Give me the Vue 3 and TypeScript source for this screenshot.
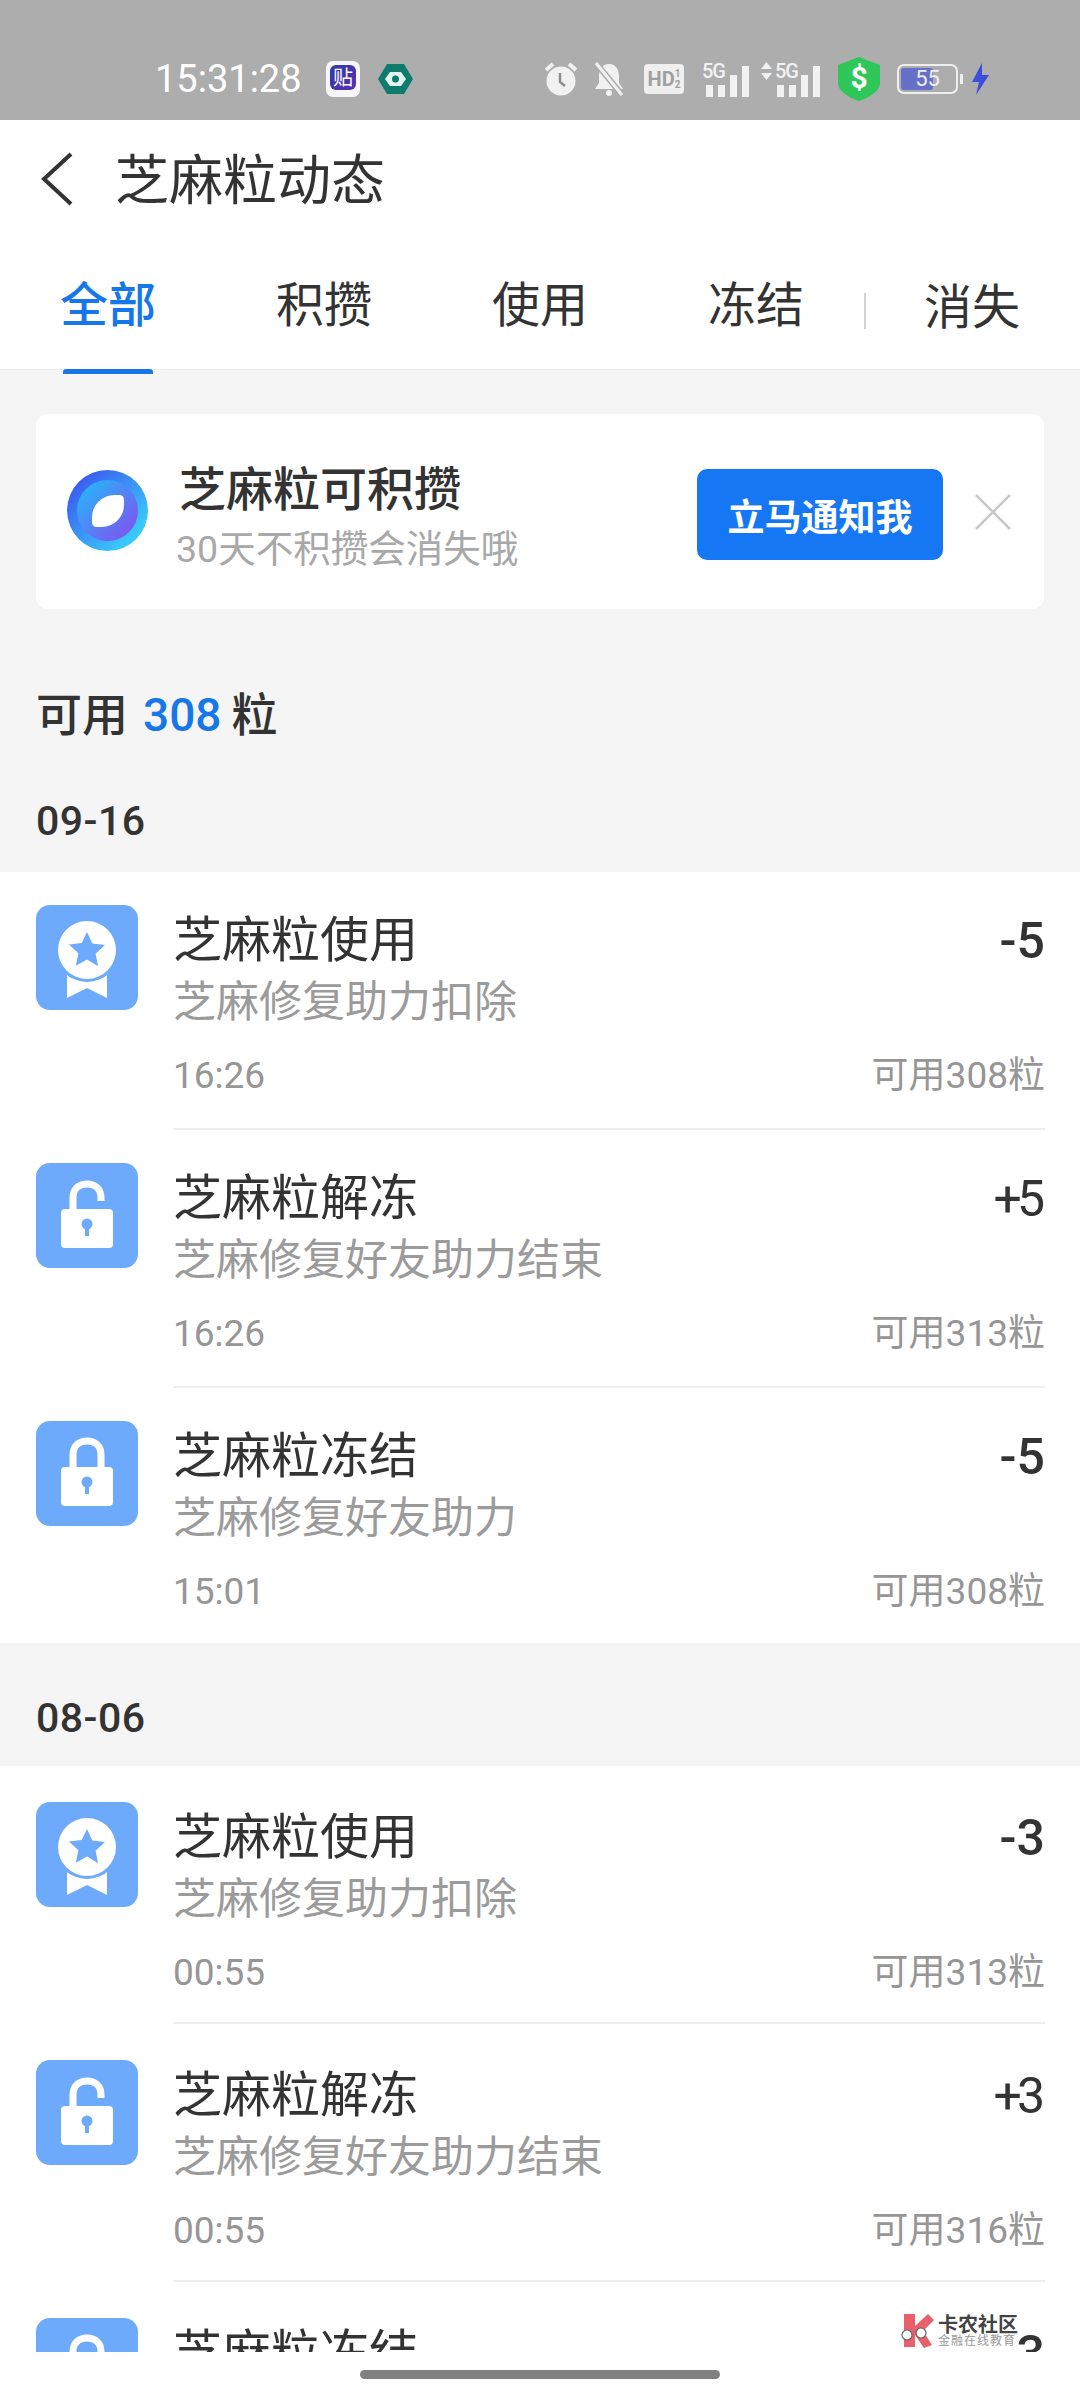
<template>
  <div class="page">
    <div class="status-bar">
      <span class="clock">15:31:28</span>
      <svg class="app-icon" width="34" height="36" viewBox="0 0 34 36">
        <defs>
          <linearGradient id="appFill" x1="0" y1="0" x2="1" y2="1">
            <stop offset="0" stop-color="#2f3aa8" />
            <stop offset="1" stop-color="#5a2fb0" />
          </linearGradient>
        </defs>
        <rect width="34" height="36" rx="7" fill="#f7f7fa" />
        <rect x="4" y="4" width="26" height="25" rx="6" fill="url(#appFill)" />
        <text x="17" y="24" text-anchor="middle" class="app-icon-text">贴</text>
      </svg>
      <svg class="hex-icon" width="35" height="32" viewBox="0 0 35 32">
        <path d="M9 1h17l9 15-9 15H9L0 16z" fill="#0e7c6c" />
        <path d="M12 9h11l5 7-5 7H12l-5-7z" fill="#e6f2ef" />
        <circle cx="17.5" cy="16" r="3.5" fill="#0e7c6c" />
      </svg>
      <div class="status-right">
        <svg width="32" height="34" viewBox="0 0 32 34">
          <circle cx="16" cy="19" r="14.5" fill="#f1f1f1" />
          <path d="M1 8l7-6M31 8l-7-6" stroke="#f1f1f1" stroke-width="4" />
          <path d="M15 11v9l5 4" fill="none" stroke="#8d8d8d" stroke-width="2.5" />
        </svg>
        <svg class="bell" width="32" height="34" viewBox="0 0 32 34">
          <path d="M16 2c7 0 10 6 10 12v7l4 6H2l4-6v-7C6 8 9 2 16 2z" fill="#f1f1f1" />
          <circle cx="16" cy="31" r="3" fill="#f1f1f1" />
          <path d="M3 1l26 32" stroke="#adadad" stroke-width="6" />
          <path d="M3 1l26 32" stroke="#f1f1f1" stroke-width="3" />
        </svg>
        <div class="hd"><span>HD</span><span class="hd-sim">1<br />2</span></div>
        <div class="signal">
          <span class="net">5G</span>
          <i class="b1"></i><i class="b2"></i><i class="b3"></i><i class="b4"></i>
        </div>
        <div class="signal signal-wide">
          <svg class="arrows" width="11" height="18" viewBox="0 0 11 18">
            <path d="M5.5 0L11 7H0zM0 11h11l-5.5 7z" fill="#f1f1f1" />
          </svg>
          <span class="net">5G</span>
          <i class="b1"></i><i class="b2"></i><i class="b3"></i><i class="b4"></i>
        </div>
        <svg class="shield" width="42" height="44" viewBox="0 0 42 44">
          <path d="M21 0l21 8v18c0 8-10 14-21 18C10 40 0 34 0 26V8z" fill="#2fc65a" />
          <text x="21" y="31" text-anchor="middle" class="shield-text">$</text>
        </svg>
        <div class="battery">
          <div class="battery-fill"></div>
          <span class="battery-num">55</span>
        </div>
        <svg class="bolt" width="19" height="32" viewBox="0 0 19 32">
          <path d="M11 0L1 19h7l-3 13 13-20h-7z" fill="#3d4de0" />
        </svg>
      </div>
    </div>

    <header class="nav">
      <svg class="back" width="32" height="54" viewBox="0 0 32 54">
        <path d="M30 2L3 27l27 25" fill="none" stroke="#333" stroke-width="4" />
      </svg>
      <span class="nav-title">芝麻粒动态</span>
    </header>

    <div class="tabs">
      <div v-for="(tab, i) in tabs" :key="tab" class="tab" :class="{ active: i === 0, last: i === 4 }">
        {{ tab }}
      </div>
    </div>

    <main class="content">
      <div class="banner">
        <div class="banner-logo">
          <div class="banner-logo-inner"></div>
          <div class="banner-leaf"></div>
        </div>
        <div class="banner-text">
          <div class="banner-title">芝麻粒可积攒</div>
          <div class="banner-sub">30天不积攒会消失哦</div>
        </div>
        <button class="notify">立马通知我</button>
        <svg class="close" width="36" height="36" viewBox="0 0 36 36">
          <path d="M1 1l34 34M35 1L1 35" stroke="#c8c8c8" stroke-width="2.5" />
        </svg>
      </div>

      <div class="balance">
        <span>可用</span>
        <span class="balance-num">308</span>
        <span>粒</span>
      </div>

      <section v-for="group in groups" :key="group.date">
        <div class="date">{{ group.date }}</div>
        <div class="list">
          <div v-for="(row, i) in group.rows" :key="i" class="row">
            <svg class="row-icon" width="102" height="105" viewBox="0 0 102 105">
              <rect width="102" height="105" rx="14" fill="#6eaafb" />
              <g v-if="row.icon === 'medal'">
                <path d="M31 70v23l20-10 20 10V70z" fill="#fff" />
                <circle cx="51" cy="45" r="32" fill="#6eaafb" />
                <circle cx="51" cy="45" r="29" fill="#fff" />
                <path d="M51 27l5.3 11.6 12.7 1.5-9.4 8.6 2.5 12.5L51 54.4l-11.1 6.3 2.5-12.5-9.4-8.6 12.7-1.5z" fill="#6eaafb" />
              </g>
              <g v-else-if="row.icon === 'unlock'">
                <path d="M37 48V35c0-9 6-14 14-14s14 5 14 14v3" fill="none" stroke="#fff" stroke-width="7" />
                <rect x="25" y="46" width="52" height="39" rx="4" fill="#fff" />
                <circle cx="51" cy="61" r="5.5" fill="#6eaafb" />
                <rect x="49" y="62" width="4" height="11" fill="#6eaafb" />
              </g>
              <g v-else>
                <path d="M37 48V34c0-9 6-14 14-14s14 5 14 14v14" fill="none" stroke="#fff" stroke-width="7" />
                <rect x="25" y="46" width="52" height="39" rx="4" fill="#fff" />
                <circle cx="51" cy="61" r="5.5" fill="#6eaafb" />
                <rect x="49" y="62" width="4" height="11" fill="#6eaafb" />
              </g>
            </svg>
            <div class="row-body">
              <div class="row-top">
                <span class="row-title">{{ row.title }}</span>
                <span class="row-amount" :class="{ plus: row.amount[0] === '+' }">{{ row.amount }}</span>
              </div>
              <div class="row-sub">{{ row.sub }}</div>
              <div class="row-meta">
                <span>{{ row.time }}</span>
                <span>可用{{ row.left }}粒</span>
              </div>
            </div>
          </div>
        </div>
      </section>

      <div class="watermark">
        <svg width="36" height="36" viewBox="0 0 36 36">
          <path d="M5 1h11v12L29 1l6 6-11 11 9 14-8 3-9-13v12H5z" fill="#e8606c" />
          <circle cx="8" cy="22" r="5" fill="#fff" stroke="#666" stroke-width="1.2" />
          <circle cx="22" cy="20" r="5" fill="#fff" stroke="#666" stroke-width="1.2" />
        </svg>
        <div class="watermark-text">
          <div class="watermark-name">卡农社区</div>
          <div class="watermark-sub">金融在线教育</div>
        </div>
      </div>
    </main>

    <footer class="home-area">
      <div class="home-bar"></div>
    </footer>
  </div>
</template>

<script setup lang="ts">
interface Row {
  icon: 'medal' | 'unlock' | 'lock'
  title: string
  sub: string
  amount: string
  time: string
  left: number
}

const tabs = ['全部', '积攒', '使用', '冻结', '消失']

const groups: { date: string; rows: Row[] }[] = [
  {
    date: '09-16',
    rows: [
      { icon: 'medal', title: '芝麻粒使用', sub: '芝麻修复助力扣除', amount: '-5', time: '16:26', left: 308 },
      { icon: 'unlock', title: '芝麻粒解冻', sub: '芝麻修复好友助力结束', amount: '+5', time: '16:26', left: 313 },
      { icon: 'lock', title: '芝麻粒冻结', sub: '芝麻修复好友助力', amount: '-5', time: '15:01', left: 308 }
    ]
  },
  {
    date: '08-06',
    rows: [
      { icon: 'medal', title: '芝麻粒使用', sub: '芝麻修复助力扣除', amount: '-3', time: '00:55', left: 313 },
      { icon: 'unlock', title: '芝麻粒解冻', sub: '芝麻修复好友助力结束', amount: '+3', time: '00:55', left: 316 },
      { icon: 'lock', title: '芝麻粒冻结', sub: '芝麻修复好友助力', amount: '-3', time: '00:55', left: 313 }
    ]
  }
]
</script>

<style scoped>
.page {
  width: 1080px;
  height: 2400px;
  display: flex;
  flex-direction: column;
  overflow: hidden;
  background: #f5f5f5;
  font-family: Roboto, "Noto Sans CJK SC", sans-serif;
  color: #333;
}

.status-bar {
  height: 120px;
  flex: none;
  box-sizing: border-box;
  padding: 57px 90px 20px 155px;
  display: flex;
  align-items: center;
  background: #adadad;
  color: #fff;
}

.clock {
  font-size: 38px;
  line-height: 44px;
  width: 171px;
}

.app-icon-text {
  font-size: 20px;
  fill: #fff;
}

.hex-icon {
  margin-left: 18px;
}

.status-right {
  margin-left: auto;
  display: flex;
  align-items: center;
  gap: 16px;
}

.hd {
  width: 40px;
  height: 30px;
  margin-left: 3px;
  display: flex;
  align-items: center;
  justify-content: center;
  border-radius: 4px;
  background: #efefef;
  color: #a0a0a0;
  font-size: 20px;
  font-weight: 700;
}

.hd-sim {
  font-size: 10px;
  line-height: 11px;
}

.signal {
  position: relative;
  width: 47px;
  height: 31px;
  margin: 6px 0 0 2px;
  display: flex;
  align-items: flex-end;
  justify-content: flex-end;
  gap: 5px;
}

.signal-wide {
  width: 59px;
  margin-left: -4px;
}

.signal-wide .net {
  left: 14px;
}

.arrows {
  position: absolute;
  left: 0;
  top: -4px;
}

.signal i {
  width: 7px;
  background: #f1f1f1;
}

.signal .b1 {
  height: 12px;
}

.signal .b2 {
  height: 12px;
}

.signal .b3 {
  height: 22px;
}

.signal .b4 {
  height: 31px;
}

.net {
  position: absolute;
  top: -6px;
  left: 0;
  font-size: 20px;
  line-height: 22px;
  letter-spacing: -1px;
  color: #f1f1f1;
  font-weight: 500;
}

.shield {
  margin-left: 2px;
}

.shield-text {
  font-size: 30px;
  font-weight: 700;
  fill: #fff;
}

.battery {
  position: relative;
  width: 61px;
  height: 30px;
  box-sizing: border-box;
  border: 2px solid #efefef;
  border-radius: 7px;
  margin-left: 1px;
}

.battery::after {
  content: "";
  position: absolute;
  right: -7px;
  top: 8px;
  width: 3px;
  height: 10px;
  background: #efefef;
}

.battery-fill {
  width: 32px;
  height: 22px;
  margin: 2px;
  border-radius: 3px;
  background: #6670c8;
}

.battery-num {
  position: absolute;
  left: 0;
  right: 0;
  top: 0;
  text-align: center;
  font-size: 22px;
  line-height: 26px;
  color: #eef;
}

.bolt {
  margin-left: -3px;
}

.nav {
  height: 120px;
  flex: none;
  box-sizing: border-box;
  padding: 0 0 2px 41px;
  display: flex;
  align-items: center;
  background: #fff;
}

.nav-title {
  margin: 6px 0 0 42px;
  font-size: 54px;
  line-height: 72px;
  color: #333;
}

.tabs {
  height: 130px;
  flex: none;
  box-sizing: border-box;
  display: grid;
  grid-template-columns: repeat(5, 216px);
  background: #fff;
  border-bottom: 1px solid #ececec;
}

.tab {
  position: relative;
  font-size: 48px;
  line-height: 132px;
  text-align: center;
  color: #333;
}

.tab.active {
  color: #1677e8;
  font-weight: 500;
}

.tab.active::after {
  content: "";
  position: absolute;
  left: 63px;
  width: 90px;
  bottom: 0;
  height: 5px;
  border-radius: 3px 3px 0 0;
  background: #1677e8;
}

.tab.last {
  padding-top: 2px;
}

.tab.last::before {
  content: "";
  position: absolute;
  left: 0;
  top: 53px;
  width: 2px;
  height: 36px;
  background: #d4d4d4;
}

.content {
  position: relative;
  flex: 1;
  min-height: 0;
  overflow: hidden;
  padding-top: 44px;
}

.banner {
  height: 195px;
  margin: 0 36px;
  box-sizing: border-box;
  padding-left: 31px;
  display: flex;
  align-items: center;
  border-radius: 12px;
  background: #fff;
}

.banner-logo {
  position: relative;
  width: 81px;
  height: 81px;
  flex: none;
  margin-top: -3px;
  border-radius: 50%;
  background: linear-gradient(135deg, #3d45f0, #38c8fa 80%);
}

.banner-logo-inner {
  position: absolute;
  inset: 10px;
  border-radius: 50%;
  background: linear-gradient(135deg, #1cc0fb, #8a48ee);
}

.banner-leaf {
  position: absolute;
  left: 25px;
  top: 25px;
  width: 32px;
  height: 32px;
  border-radius: 70% 14% 70% 14%;
  background: #fff;
}

.banner-text {
  margin-left: 31px;
  width: 518px;
  padding-top: 14px;
}

.banner-title {
  font-size: 47px;
  line-height: 60px;
  font-weight: 500;
  color: #333;
}

.banner-sub {
  font-size: 37.5px;
  line-height: 58px;
  color: #a8a8a8;
  margin-left: -3px;
}

.notify {
  width: 246px;
  height: 91px;
  flex: none;
  margin-top: 6px;
  border: 0;
  border-radius: 10px;
  background: #1677f5;
  color: #fff;
  font-family: inherit;
  font-size: 37px;
  font-weight: 700;
}

.close {
  margin-left: 32px;
}

.balance {
  margin: 76px 0 0 36px;
  height: 60px;
  display: flex;
  font-size: 46px;
  line-height: 60px;
  font-weight: 500;
  color: #333;
}

.balance-num {
  margin: 0 10px 0 15px;
  color: #1677e8;
}

.date {
  height: 127px;
  box-sizing: border-box;
  padding: 52px 0 0 36px;
  font-size: 41px;
  line-height: 48px;
  letter-spacing: 0.5px;
  font-weight: 500;
  color: #333;
}

section + section .date {
  height: 123px;
  padding-top: 51px;
}

.list {
  background: #fff;
}

section + section .list {
  padding-top: 3px;
}

.row {
  height: 258px;
  box-sizing: border-box;
  display: flex;
  padding-left: 36px;
}

.row:last-child {
  height: 255px;
}

.row-icon {
  margin-top: 33px;
  flex: none;
}

.row-body {
  margin-left: 35px;
  flex: 1;
  margin-right: 35px;
  box-sizing: border-box;
  padding-top: 33px;
  border-bottom: 2px solid #eeeeee;
}

section + section .row-body {
  height: 255px;
}

.row:last-child .row-body {
  border-bottom: 0;
}

.row-top,
.row-meta {
  display: flex;
  justify-content: space-between;
}

.row-top {
  height: 67px;
}

.row-title {
  font-size: 49px;
  line-height: 71px;
  color: #333;
}

.row-amount {
  font-size: 50px;
  line-height: 72px;
  font-weight: 500;
  color: #333;
}

.row-amount.plus {
  margin-right: 5px;
  letter-spacing: -5px;
  font-weight: 400;
}

.row-sub {
  font-size: 43px;
  line-height: 60px;
  color: #9b9b9b;
}

.row-meta {
  margin-top: 14px;
  font-size: 37px;
  line-height: 60px;
  color: #969696;
}

.watermark {
  position: absolute;
  left: 899px;
  top: 1943px;
  width: 125px;
  display: flex;
  align-items: flex-start;
}

.watermark-text {
  margin-left: 3px;
}

.watermark-name {
  font-size: 20px;
  line-height: 24px;
  font-weight: 700;
  color: #444;
}

.watermark-sub {
  margin-top: -4px;
  font-size: 12px;
  line-height: 16px;
  letter-spacing: 1px;
  color: #999;
}

.home-area {
  height: 48px;
  flex: none;
  display: flex;
  justify-content: center;
  padding-top: 18px;
  box-sizing: border-box;
  background: #fff;
}

.home-bar {
  width: 360px;
  height: 9px;
  border-radius: 5px;
  background: #808080;
}
</style>
